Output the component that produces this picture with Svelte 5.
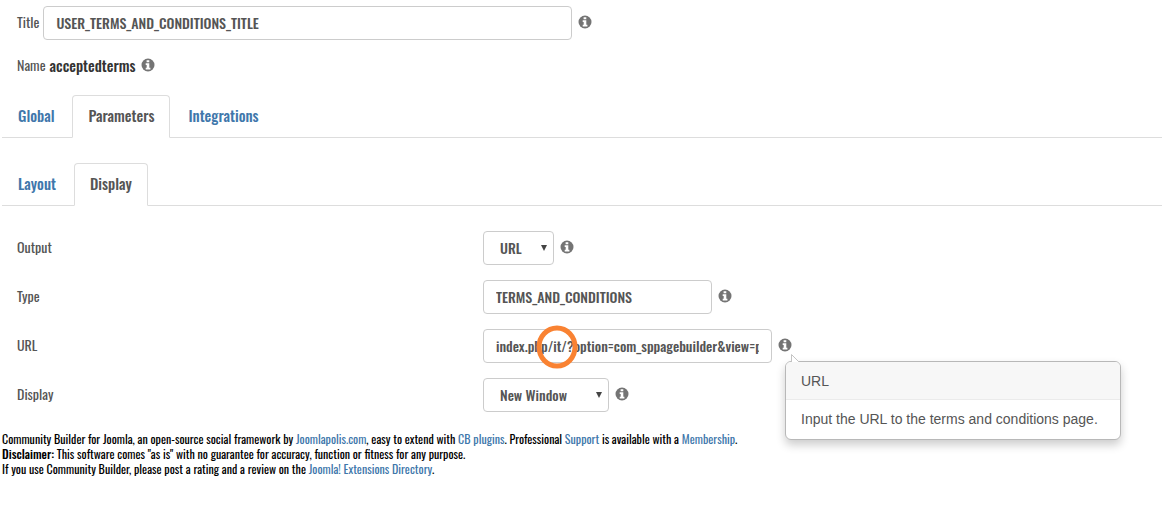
<script>
  const mainTabs = ['Global', 'Parameters', 'Integrations'];
  const subTabs = ['Layout', 'Display'];
  let mainTab = $state('Parameters');
  let subTab = $state('Display');
  let title = $state('USER_TERMS_AND_CONDITIONS_TITLE');
  let type = $state('TERMS_AND_CONDITIONS');
  let url = $state('index.php/it/?option=com_sppagebuilder&view=page');
</script>

{#snippet info()}
  <svg class="info" viewBox="0 0 14 14" aria-hidden="true">
    <circle cx="7" cy="7" r="6.5" fill="#747474" />
    <path d="M5.6 2.2h2.7v2H5.6zM4.7 5.2h3.6v4.5h1.1v1.8H4.7V9.7h1V7h-1z" fill="#fff" />
  </svg>
{/snippet}

{#snippet tabs(names, active, pick)}
  <div class="tabs" role="tablist">
    {#each names as name}
      <button type="button" role="tab" class:active={name === active} aria-selected={name === active} onclick={() => pick(name)}>{name}</button>
    {/each}
  </div>
{/snippet}

<main>
  <div class="line title">
    <label for="title">Title</label>
    <input id="title" class="wide" type="text" bind:value={title} />
    {@render info()}
  </div>
  <div class="line name">
    <span>Name</span>
    <strong>acceptedterms</strong>
    {@render info()}
  </div>

  {@render tabs(mainTabs, mainTab, (n) => (mainTab = n))}
  {@render tabs(subTabs, subTab, (n) => (subTab = n))}

  <form>
    <div class="row">
      <label for="output">Output</label>
      <div class="field">
        <span class="select short"><select id="output"><option>URL</option></select></span>
        {@render info()}
      </div>
    </div>
    <div class="row">
      <label for="type">Type</label>
      <div class="field">
        <input id="type" class="medium" type="text" bind:value={type} />
        {@render info()}
      </div>
    </div>
    <div class="row">
      <label for="url">URL</label>
      <div class="field">
        <span class="marked">
          <input id="url" class="large" type="text" bind:value={url} />
          <svg class="ring" viewBox="0 0 42 44" aria-hidden="true">
            <ellipse cx="21" cy="22" rx="18" ry="19" fill="none" stroke="#f98232" stroke-width="5" />
          </svg>
        </span>
        <span class="anchor">
          {@render info()}
          <span class="popover" role="tooltip">
            <svg class="tip" viewBox="0 0 9 8" aria-hidden="true">
              <path d="M.5 8V.5L8 8" fill="#fff" stroke="#c4c4c4" />
            </svg>
            <span class="head">URL</span>
            <span class="body">Input the URL to the terms and conditions page.</span>
          </span>
        </span>
      </div>
    </div>
    <div class="row">
      <label for="display">Display</label>
      <div class="field">
        <span class="select mid"><select id="display"><option>New Window</option></select></span>
        {@render info()}
      </div>
    </div>
  </form>

  <footer>
    <p>Community Builder for Joomla, an open-source social framework by <a href="#joomlapolis">Joomlapolis.com</a>, easy to extend with <a href="#plugins">CB plugins</a>. Professional <a href="#support">Support</a> is available with a <a href="#membership">Membership</a>.</p>
    <p><b>Disclaimer:</b> This software comes "as is" with no guarantee for accuracy, function or fitness for any purpose.</p>
    <p>If you use Community Builder, please post a rating and a review on the <a href="#directory">Joomla! Extensions Directory</a>.</p>
  </footer>
</main>

<style>
  :global(body) {
    margin: 0;
    background: #fff;
  }
  main {
    padding: 6px 0 0 2px;
    font: 14px/20px Oswald, 'Roboto Condensed', 'Open Sans Condensed', 'Liberation Sans Narrow', 'Liberation Sans', sans-serif;
    color: #555;
  }
  input, select, button {
    box-sizing: border-box;
    font: inherit;
    color: inherit;
  }
  input, select {
    height: 34px;
    max-width: 100%;
    padding: 0 12px 2px;
    border: 1px solid #ccc;
    border-radius: 4px;
    background: #fff;
    font-weight: 500;
  }
  .wide { width: 529px; }
  .medium { width: 229px; }
  .large { width: 289px; }
  .line {
    display: flex;
    align-items: center;
    padding-left: 15px;
  }
  .title { gap: 4px; }
  .title label, .row label { padding-bottom: 2px; }
  .title .info { margin-left: 2px; }
  .name {
    gap: 4px;
    padding-top: 15px;
    padding-bottom: 20px;
  }
  .name strong {
    font-size: 15px;
    font-weight: 500;
    color: #333;
  }
  .name .info { margin: 0 0 0 2px; }
  .info {
    display: block;
    flex: none;
    width: 14px;
    height: 14px;
    margin-bottom: 3px;
  }
  .tabs {
    display: flex;
    gap: 2px;
    margin-bottom: 25px;
    border-bottom: 1px solid #ddd;
  }
  .tabs button {
    height: 43px;
    margin-bottom: -1px;
    padding: 0 15px 4px;
    border: 1px solid transparent;
    border-radius: 4px 4px 0 0;
    background: none;
    font-size: 15px;
    font-weight: 500;
    color: #4077ab;
  }
  .tabs button.active {
    border-color: #ddd #ddd #fff;
    background: #fff;
    color: #555;
  }
  form {
    display: grid;
    gap: 15px;
    padding-left: 15px;
  }
  .row {
    display: grid;
    grid-template-columns: 466px 1fr;
    align-items: center;
  }
  .field {
    display: flex;
    align-items: center;
    gap: 6px;
  }
  .select { display: grid; }
  .select select {
    appearance: none;
    grid-area: 1 / 1;
    padding: 0 16px;
  }
  .select::after {
    content: '';
    grid-area: 1 / 1;
    place-self: center end;
    width: 6px;
    height: 6px;
    margin-right: 7px;
    background: #444;
    clip-path: polygon(0 0, 100% 0, 50% 100%);
    pointer-events: none;
  }
  .short { width: 71px; }
  .mid { width: 126px; }
  .marked, .anchor {
    position: relative;
    display: block;
  }
  .ring {
    position: absolute;
    left: 53px;
    top: -4px;
    width: 42px;
    height: 44px;
    pointer-events: none;
  }
  .popover {
    position: absolute;
    z-index: 1;
    left: 7px;
    top: 23px;
    min-width: 334px;
    border: 1px solid #b8b8b8;
    border-radius: 6px;
    background: #fff;
    box-shadow: 0 5px 10px rgba(0, 0, 0, 0.2);
    font: 14px/20px 'Liberation Sans', Arial, sans-serif;
    white-space: nowrap;
  }
  .head, .body {
    display: block;
    padding: 9px 15px 8px;
  }
  .head {
    border-bottom: 1px solid #ebebeb;
    border-radius: 5px 5px 0 0;
    background: #f7f7f7;
  }
  .body { padding-bottom: 10px; }
  .tip {
    position: absolute;
    left: 5px;
    top: -8px;
    width: 9px;
    height: 8px;
  }
  footer {
    padding-top: 19px;
    font-size: 12px;
    line-height: 15px;
    color: #000;
  }
  footer b { font-weight: 500; }
  p { margin: 0; }
  a {
    color: #4077ab;
    text-decoration: none;
  }
</style>
